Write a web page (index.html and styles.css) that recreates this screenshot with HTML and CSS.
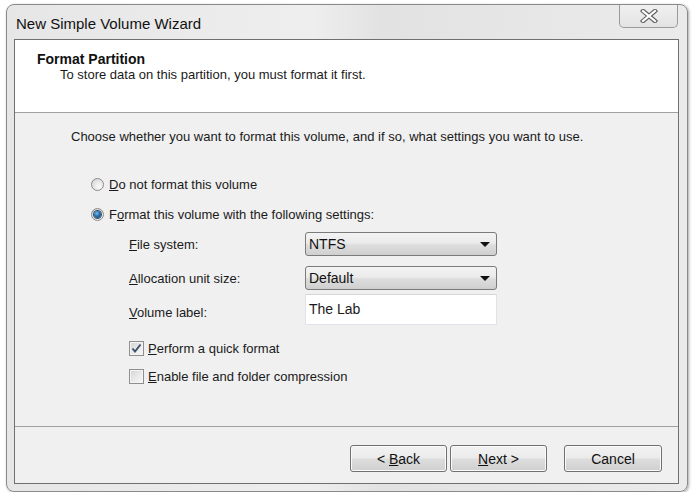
FILE: index.html
```html
<!DOCTYPE html>
<html>
<head>
<meta charset="utf-8">
<link rel="stylesheet" href="styles.css">
</head>
<body>
<div class="window">
  <div class="titlebar">
    <span class="title">New Simple Volume Wizard</span>
    <div class="close">
      <svg width="18" height="14" viewBox="0 0 18 14">
        <path d="M3 2 L15 12 M15 2 L3 12" stroke="#5e5e5e" stroke-width="4.4" stroke-linecap="square" fill="none"/>
        <path d="M3 2 L15 12 M15 2 L3 12" stroke="#ffffff" stroke-width="2.2" stroke-linecap="square" fill="none"/>
      </svg>
    </div>
  </div>
  <div class="content">
    <div class="header">
      <div class="h-title">Format Partition</div>
      <div class="h-sub">To store data on this partition, you must format it first.</div>
    </div>
    <div class="main">
      <div class="intro">Choose whether you want to format this volume, and if so, what settings you want to use.</div>
      <div class="opt opt1"><span class="radio"></span><span><u>D</u>o not format this volume</span></div>
      <div class="opt opt2"><span class="radio on"><span class="dot"></span></span><span>F<u>o</u>rmat this volume with the following settings:</span></div>
      <div class="field f1"><span class="lbl"><u>F</u>ile system:</span><div class="combo"><span>NTFS</span><span class="arrow"></span></div></div>
      <div class="field f2"><span class="lbl"><u>A</u>llocation unit size:</span><div class="combo"><span>Default</span><span class="arrow"></span></div></div>
      <div class="field f3"><span class="lbl vl"><u>V</u>olume label:</span><div class="textbox">The Lab</div></div>
      <div class="chk c1"><span class="box"><svg width="11" height="11" viewBox="0 0 11 11"><path d="M1.5 5.5 L4 8.5 L9.5 1.5" stroke="#3b4f6e" stroke-width="1.9" fill="none"/></svg></span><span><u>P</u>erform a quick format</span></div>
      <div class="chk c2"><span class="box"></span><span><u>E</u>nable file and folder compression</span></div>
    </div>
    <div class="footer">
      <div class="btn"><span>&lt; <u>B</u>ack</span></div>
      <div class="btn next"><span><u>N</u>ext &gt;</span></div>
      <div class="btn cancel"><span>Cancel</span></div>
    </div>
  </div>
</div>
</body>
</html>
```
FILE: styles.css
```css
html, body {
  margin: 0;
  padding: 0;
  background: #ffffff;
}
body {
  font-family: "Liberation Sans", Arial, sans-serif;
  color: #1a1a1a;
  font-size: 13px;
}
.window {
  margin: 4px 6px 0 6px;
  width: 682px;
  height: 488px;
  box-sizing: border-box;
  border: 1px solid #8a8a8a;
  border-radius: 8px;
  background: linear-gradient(90deg, #e6e6e6 0%, #eeeeee 45%, #e2e2e2 55%, #ebebeb 100%);
  padding: 0 8px 7px 7px;
  display: flex;
  flex-direction: column;
  box-shadow: 1px 1px 3px rgba(0,0,0,0.35);
}
.titlebar {
  height: 34px;
  display: flex;
  align-items: flex-start;
}
.title {
  font-size: 15px;
  color: #111;
  margin-left: 2px;
  margin-top: 10px;
  line-height: 18px;
}
.close {
  margin-left: auto;
  width: 59px;
  height: 23px;
  box-sizing: border-box;
  border: 1px solid #9a9a9a;
  border-top: none;
  border-radius: 0 0 5px 5px;
  background: linear-gradient(#f0f0f0, #e3e3e3);
  display: flex;
  align-items: center;
  justify-content: center;
  margin-right: 1px;
}
.content {
  flex: 1;
  border: 1px solid #6f6f6f;
  background: #f0f0f0;
  display: flex;
  flex-direction: column;
}
.header {
  height: 73px;
  background: #ffffff;
  border-bottom: 1px solid #a0a0a0;
  box-sizing: border-box;
  padding: 11px 0 0 22px;
}
.h-title {
  font-weight: bold;
  font-size: 14px;
  line-height: 16px;
  color: #111;
}
.h-sub {
  margin-left: 23px;
  font-size: 13px;
  line-height: 16px;
}
.main {
  flex: 1;
  padding: 14px 0 0 56px;
  font-size: 13px;
}
.intro {
  height: 20px;
  line-height: 20px;
}
.opt {
  display: flex;
  align-items: center;
  height: 20px;
  margin-left: 20px;
  gap: 5px;
}
.opt1 { margin-top: 27px; }
.opt2 { margin-top: 10px; }
.radio {
  width: 13px;
  height: 13px;
  box-sizing: border-box;
  border-radius: 50%;
  border: 1px solid #8b8b8b;
  background: radial-gradient(circle at 65% 70%, #fbfbfb 0%, #e6e6e6 50%, #cfcfcf 100%);
  display: flex;
  align-items: center;
  justify-content: center;
}
.dot {
  width: 7px;
  height: 7px;
  border-radius: 50%;
  background: radial-gradient(circle at 40% 35%, #79c0ef 0%, #2a77b4 40%, #0e2e50 100%);
  box-shadow: 0 0 0 1px #3d4f66;
}
.field {
  display: flex;
  align-items: center;
  margin-left: 58px;
}
.lbl {
  width: 176px;
}
.f1 { margin-top: 8px; height: 24px; }
.f2 { margin-top: 10px; height: 24px; }
.f3 { margin-top: 4px; height: 31px; }
.vl { padding-top: 6px; }
.combo {
  width: 192px;
  height: 24px;
  box-sizing: border-box;
  border: 1px solid #7a7a7a;
  border-radius: 3px;
  background: linear-gradient(#f3f3f3 0%, #ebebeb 45%, #dddddd 55%, #cfcfcf 100%);
  display: flex;
  align-items: center;
  padding: 0 5px 0 3px;
  font-size: 14px;
  color: #111;
}
.arrow {
  margin-left: auto;
  width: 0;
  height: 0;
  border-left: 5px solid transparent;
  border-right: 5px solid transparent;
  border-top: 5px solid #111;
  margin-right: 1px;
}
.textbox {
  width: 192px;
  height: 31px;
  box-sizing: border-box;
  border: 1px solid #e2e3ea;
  border-top-color: #d5d5d5;
  background: #ffffff;
  font-size: 14px;
  padding: 5px 0 0 3px;
  line-height: 18px;
}
.chk {
  display: flex;
  align-items: center;
  height: 20px;
  margin-left: 58px;
  gap: 4px;
}
.c1 { margin-top: 13px; }
.c2 { margin-top: 8px; }
.box {
  width: 15px;
  height: 15px;
  box-sizing: border-box;
  border: 1px solid #8e8f8f;
  background: linear-gradient(135deg, #d4d4d4 0%, #ececec 60%, #f8f8f8 100%);
  box-shadow: inset 0 0 0 1px #f4f4f4;
  display: flex;
  align-items: center;
  justify-content: center;
}
.footer {
  height: 57px;
  border-top: 1px solid #a0a0a0;
  box-sizing: border-box;
  display: flex;
  justify-content: flex-end;
  align-items: flex-start;
  padding: 18px 16px 0 0;
}
.btn {
  width: 97px;
  height: 27px;
  box-sizing: border-box;
  border: 1px solid #707070;
  border-radius: 3px;
  background: linear-gradient(#f2f2f2 0%, #ebebeb 48%, #dddddd 52%, #cfcfcf 100%);
  box-shadow: inset 0 0 0 1px #fbfbfb;
  display: flex;
  align-items: center;
  justify-content: center;
  font-size: 14px;
  color: #111;
}
.next { margin-left: 3px; }
.cancel { margin-left: 17px; width: 98px; }
```
